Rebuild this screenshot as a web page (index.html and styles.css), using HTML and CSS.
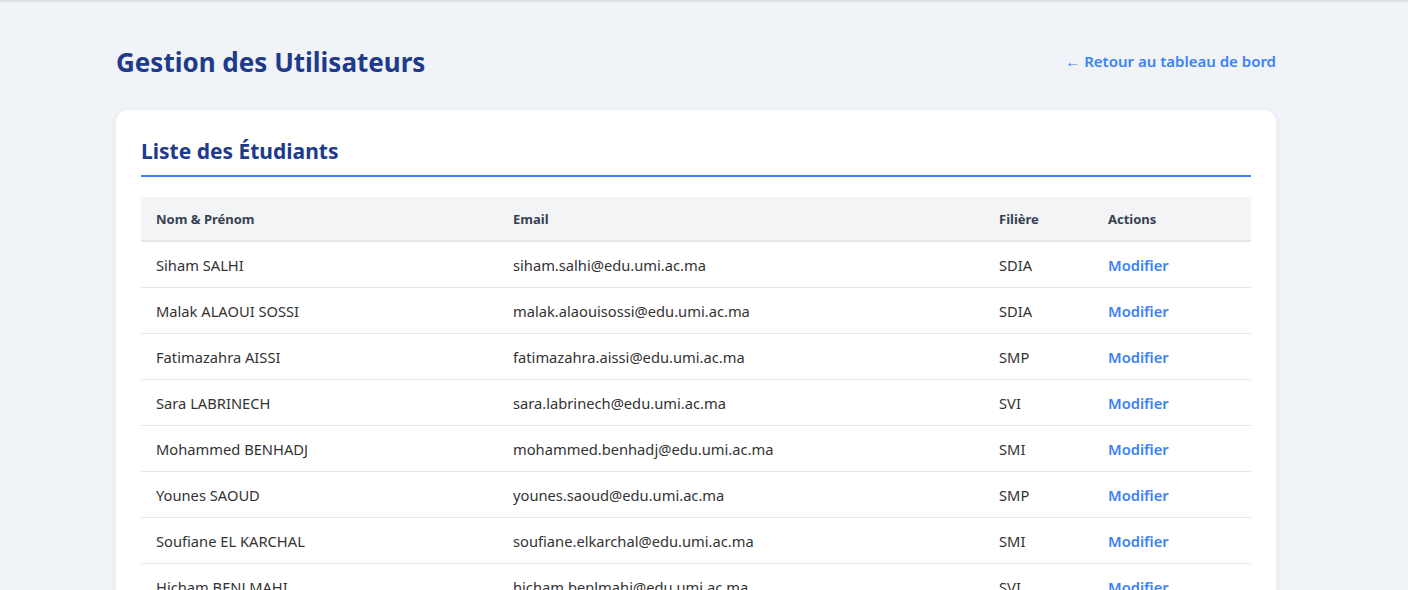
FILE: index.html
```html
<!DOCTYPE html>
<html lang="fr">
<head>
<meta charset="utf-8">
<title>Gestion des Utilisateurs</title>
<link rel="stylesheet" href="styles.css">
</head>
<body>
<div class="page">
  <header class="page-header">
    <h1 class="page-title">Gestion des Utilisateurs</h1>
    <a class="back-link" href="#">← Retour au tableau de bord</a>
  </header>
  <section class="card">
    <h2 class="card-title">Liste des Étudiants</h2>
    <table class="users">
      <thead>
        <tr>
          <th class="c-name">Nom &amp; Prénom</th>
          <th class="c-email">Email</th>
          <th class="c-fil">Filière</th>
          <th class="c-act">Actions</th>
        </tr>
      </thead>
      <tbody>
        <tr><td>Siham SALHI</td><td>siham.salhi@edu.umi.ac.ma</td><td>SDIA</td><td><a class="edit" href="#">Modifier</a></td></tr>
        <tr><td>Malak ALAOUI SOSSI</td><td>malak.alaouisossi@edu.umi.ac.ma</td><td>SDIA</td><td><a class="edit" href="#">Modifier</a></td></tr>
        <tr><td>Fatimazahra AISSI</td><td>fatimazahra.aissi@edu.umi.ac.ma</td><td>SMP</td><td><a class="edit" href="#">Modifier</a></td></tr>
        <tr><td>Sara LABRINECH</td><td>sara.labrinech@edu.umi.ac.ma</td><td>SVI</td><td><a class="edit" href="#">Modifier</a></td></tr>
        <tr><td>Mohammed BENHADJ</td><td>mohammed.benhadj@edu.umi.ac.ma</td><td>SMI</td><td><a class="edit" href="#">Modifier</a></td></tr>
        <tr><td>Younes SAOUD</td><td>younes.saoud@edu.umi.ac.ma</td><td>SMP</td><td><a class="edit" href="#">Modifier</a></td></tr>
        <tr><td>Soufiane EL KARCHAL</td><td>soufiane.elkarchal@edu.umi.ac.ma</td><td>SMI</td><td><a class="edit" href="#">Modifier</a></td></tr>
        <tr><td>Hicham BENLMAHI</td><td>hicham.benlmahi@edu.umi.ac.ma</td><td>SVI</td><td><a class="edit" href="#">Modifier</a></td></tr>
      </tbody>
    </table>
  </section>
</div>
</body>
</html>
```
FILE: styles.css
```css
html, body {
  margin: 0;
  padding: 0;
}
body {
  background: #f0f3f8;
  font-family: "Noto Sans", "Open Sans", sans-serif;
  color: #333;
  border-top: 2px solid #dfe1e5;
  overflow: hidden;
}
.page {
  width: 1160px;
  margin-left: 116px;
  padding-top: 37px;
}
.page-header {
  display: flex;
  justify-content: space-between;
  align-items: center;
  margin-bottom: 25px;
}
.page-title {
  margin: 0;
  font-size: 26px;
  font-weight: 700;
  color: #1e3a8a;
  line-height: 46px;
}
.back-link {
  color: #3b82f6;
  font-weight: 600;
  font-size: 15px;
  text-decoration: none;
  margin-top: -2px;
}
.card {
  background: #fff;
  border-radius: 12px;
  box-shadow: 0 2px 10px rgba(0, 0, 0, 0.06);
  padding: 25px 25px 30px;
}
.card-title {
  margin: 0 0 20px;
  font-size: 21px;
  font-weight: 700;
  color: #1e3a8a;
  padding-bottom: 8px;
  border-bottom: 2px solid #3b82f6;
  line-height: 32px;
}
.users {
  width: 100%;
  border-collapse: collapse;
}
.users th {
  background: #f3f4f6;
  text-align: left;
  font-size: 13px;
  font-weight: 700;
  color: #374151;
  padding: 0 15px;
  height: 43px;
  border-bottom: 2px solid #e5e7eb;
}
.users td {
  font-size: 14.7px;
  padding: 0 15px;
  height: 45px;
  border-bottom: 1px solid #e5e7eb;
}
.c-name { width: 327px; }
.c-email { width: 456px; }
.c-fil { width: 79px; }
.edit {
  color: #3b82f6;
  font-weight: 600;
  text-decoration: none;
}
```
